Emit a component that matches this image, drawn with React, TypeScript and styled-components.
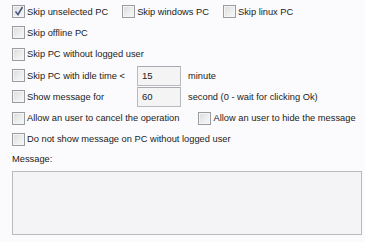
import React from "react";
import styled, { createGlobalStyle } from "styled-components";

const GlobalStyle = createGlobalStyle`
  html, body {
    margin: 0;
    padding: 0;
    background: #fbfbfd;
  }
  body {
    font-family: "Liberation Sans", Arial, sans-serif;
    font-size: 9.3px;
    color: #222;
  }
`;

const Panel = styled.div`
  width: 365px;
  height: 242px;
  box-sizing: border-box;
  padding: 1px 4px 0 12px;
  display: flex;
  flex-direction: column;
`;

const Row = styled.div<{ $gap?: number }>`
  height: 21.3px;
  display: flex;
  align-items: center;
  gap: ${(p) => p.$gap ?? 15}px;
`;

const FieldRow = styled.div`
  height: 21.3px;
  display: grid;
  grid-template-columns: 118px 44px auto;
  align-items: center;
  column-gap: 7px;
`;

const Check = styled.label`
  display: inline-flex;
  align-items: center;
  gap: 2px;
  white-space: nowrap;
`;

const Box = styled.span`
  position: relative;
  width: 11px;
  height: 11px;
  border: 1px solid #9a9ca0;
  background: linear-gradient(135deg, #d9dadc 0%, #eceded 55%, #f8f8f8 100%);
  box-shadow: inset 0 0 0 1px #f4f4f4;
  flex: none;
`;

const Tick = styled.svg`
  position: absolute;
  left: 1px;
  top: 0px;
`;

const Input = styled.div`
  box-sizing: border-box;
  height: 20px;
  border: 1px solid #b8b9bc;
  border-top-color: #a9aaad;
  background: #f4f4f5;
  padding: 0 4px;
  display: flex;
  align-items: center;
  font-size: 9.5px;
`;

const Label = styled.div`
  margin-top: 2px;
  height: 14px;
  line-height: 14px;
`;

const MessageBox = styled.div`
  margin-top: 5px;
  width: 350px;
  height: 64px;
  box-sizing: border-box;
  border: 1px solid #b9b9bd;
  background: #f4f3f6;
`;

type CheckProps = { text: string; checked?: boolean };

const CheckItem = ({ text, checked }: CheckProps) => (
  <Check>
    <Box>
      {checked && (
        <Tick width="10" height="11" viewBox="0 0 10 11">
          <path d="M1.5 5.5 L4 8.5 L8.5 1" fill="none" stroke="#4b5a7e" strokeWidth="1.6" />
        </Tick>
      )}
    </Box>
    <span>{text}</span>
  </Check>
);

export default function App() {
  return (
    <>
      <GlobalStyle />
      <Panel>
        <Row $gap={14}>
          <CheckItem text="Skip unselected PC" checked />
          <CheckItem text="Skip windows PC" />
          <CheckItem text="Skip linux PC" />
        </Row>
        <Row>
          <CheckItem text="Skip offline PC" />
        </Row>
        <Row>
          <CheckItem text="Skip PC without logged user" />
        </Row>
        <FieldRow>
          <CheckItem text="Skip PC with idle time <" />
          <Input>15</Input>
          <span>minute</span>
        </FieldRow>
        <FieldRow>
          <CheckItem text="Show message for" />
          <Input>60</Input>
          <span>second (0 - wait for clicking Ok)</span>
        </FieldRow>
        <Row $gap={19}>
          <CheckItem text="Allow an user to cancel the operation" />
          <CheckItem text="Allow an user to hide the message" />
        </Row>
        <Row>
          <CheckItem text="Do not show message on PC without logged user" />
        </Row>
        <Label>Message:</Label>
        <MessageBox />
      </Panel>
    </>
  );
}
